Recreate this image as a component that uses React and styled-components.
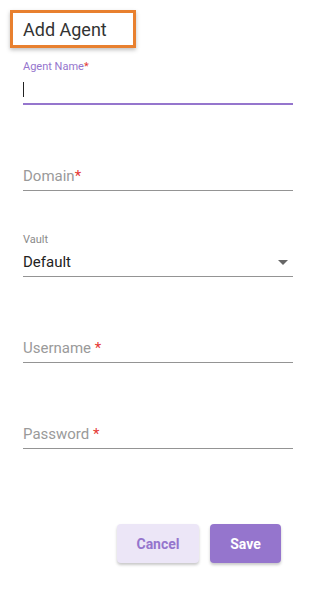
import React from 'react'
import styled, { createGlobalStyle } from 'styled-components'

const GlobalStyle = createGlobalStyle`
  body {
    margin: 0;
    background: #fff;
    font-family: Roboto, "Liberation Sans", Arial, sans-serif;
  }
`

const fields = [
  { name: 'domain', placeholder: 'Domain', star: '*' },
  { name: 'vault', label: 'Vault', value: 'Default', select: true },
  { name: 'username', placeholder: 'Username', star: ' *' },
  { name: 'password', placeholder: 'Password', star: ' *' },
]

function App() {
  return (
    <Page>
      <GlobalStyle />
      <TitleBox>Add Agent</TitleBox>
      <Form>
        <Field focused>
          <Label focused>
            Agent Name<Star>*</Star>
          </Label>
          <InputRow>
            <Caret />
          </InputRow>
        </Field>
        {fields.map((f) => (
          <Field key={f.name}>
            <Label>{f.label}</Label>
            <InputRow>
              {f.value ? (
                <Value>{f.value}</Value>
              ) : (
                <Placeholder>
                  {f.placeholder}
                  <Star>{f.star}</Star>
                </Placeholder>
              )}
              {f.select && <Arrow />}
            </InputRow>
          </Field>
        ))}
      </Form>
      <Actions>
        <Button>Cancel</Button>
        <Button primary>Save</Button>
      </Actions>
    </Page>
  )
}

export default App

const Page = styled.div`
  width: 317px;
  min-height: 593px;
  padding: 10px 24px 0 23px;
  box-sizing: border-box;
`

const TitleBox = styled.div`
  width: 126px;
  height: 38px;
  margin-left: -13px;
  box-sizing: border-box;
  border: 3px solid #e8802f;
  box-shadow: 0 2px 4px rgba(0, 0, 0, 0.25);
  padding-left: 10px;
  display: flex;
  align-items: center;
  font-size: 18px;
  color: #333;
`

const Form = styled.div`
  display: flex;
  flex-direction: column;
  gap: 41px;
  margin-top: 11px;
`

const Field = styled.div`
  display: flex;
  flex-direction: column;
  border-bottom: ${(p) => (p.focused ? '2px solid #9575cd' : '1px solid #949494')};
`

const Label = styled.div`
  height: 16px;
  line-height: 16px;
  font-size: 11px;
  color: ${(p) => (p.focused ? '#9575cd' : '#8a8a8a')};
`

const InputRow = styled.div`
  height: 28px;
  display: flex;
  align-items: center;
  justify-content: space-between;
  font-size: 15px;
`

const Caret = styled.span`
  width: 1px;
  height: 15px;
  background: #222;
`

const Placeholder = styled.span`
  color: #9a9a9a;
`

const Value = styled.span`
  color: #222;
`

const Star = styled.span`
  color: #e53935;
`

const Arrow = styled.span`
  width: 0;
  height: 0;
  margin-right: 5px;
  border-left: 5px solid transparent;
  border-right: 5px solid transparent;
  border-top: 5px solid #666;
`

const Actions = styled.div`
  display: flex;
  justify-content: flex-end;
  gap: 11px;
  margin-top: 75px;
  padding-right: 12px;
`

const Button = styled.button`
  height: 39px;
  min-width: ${(p) => (p.primary ? '71px' : '82px')};
  padding: 0 16px;
  border: none;
  border-radius: 4px;
  font-family: Roboto, "Liberation Sans", Arial, sans-serif;
  font-size: 14px;
  font-weight: 700;
  background: ${(p) => (p.primary ? '#9575cd' : '#ece6f7')};
  color: ${(p) => (p.primary ? '#fff' : '#9575cd')};
  box-shadow: 0 2px 3px rgba(0, 0, 0, 0.22);
`
